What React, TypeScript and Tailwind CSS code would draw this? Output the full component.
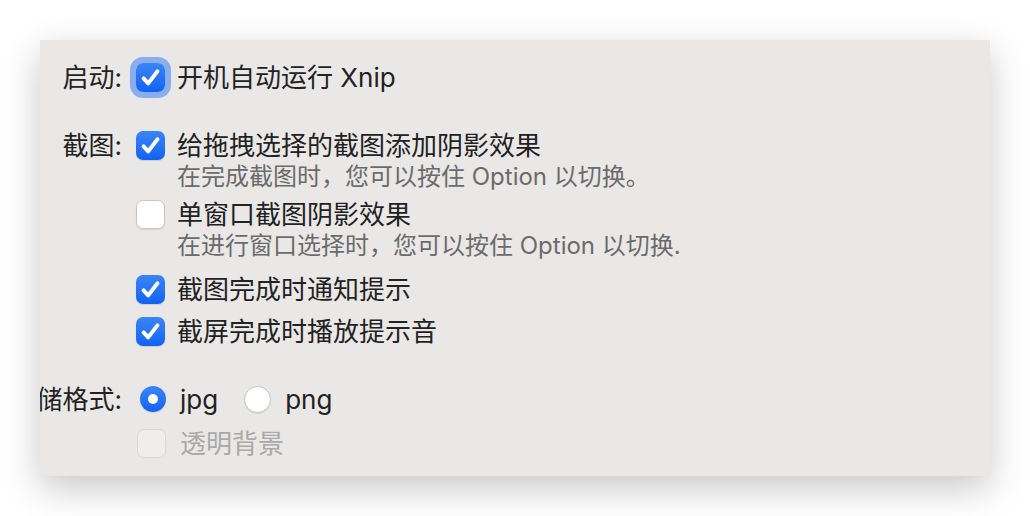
import React from "react";

const FONT = { fontFamily: '"Inter", "Noto Sans CJK SC", sans-serif' };

function Check({ checked, focus, disabled }: { checked?: boolean; focus?: boolean; disabled?: boolean }) {
  if (disabled) {
    return (
      <div className="w-[29px] h-[29px] shrink-0 rounded-[7px] border border-[#d9d8d7] bg-[#efeeed]" />
    );
  }
  if (!checked) {
    return (
      <div className="w-[29px] h-[29px] shrink-0 rounded-[7px] border border-[#c6c6c6] bg-white shadow-[0_1px_1px_rgba(0,0,0,0.08)]" />
    );
  }
  return (
    <div
      className={
        "w-[29px] h-[29px] shrink-0 rounded-[7px] bg-gradient-to-b from-[#3a85f8] to-[#1262f1] flex items-center justify-center " +
        (focus ? "shadow-[0_0_0_6px_rgba(120,162,242,0.85)]" : "shadow-[0_1px_1px_rgba(0,0,0,0.12)]")
      }
    >
      <svg width="29" height="29" viewBox="0 0 29 29">
        <path d="M7.6 15.4 L12.2 20.4 L21.4 8.4" fill="none" stroke="white" strokeWidth="4" strokeLinecap="round" strokeLinejoin="round" />
      </svg>
    </div>
  );
}

function Radio({ on }: { on?: boolean }) {
  if (on) {
    return (
      <div className="w-[26px] h-[26px] shrink-0 rounded-full bg-gradient-to-b from-[#3a85f8] to-[#1262f1] flex items-center justify-center shadow-[0_1px_1px_rgba(0,0,0,0.12)]">
        <div className="w-[10px] h-[10px] rounded-full bg-white" />
      </div>
    );
  }
  return (
    <div className="w-[27px] h-[27px] shrink-0 rounded-full border border-[#c6c6c6] bg-white shadow-[0_1px_1px_rgba(0,0,0,0.08)]" />
  );
}

function Label({ text }: { text?: string }) {
  return (
    <div className="w-[82px] shrink-0 flex justify-end">
      {text ? <span className="shrink-0 whitespace-nowrap text-[26px] text-[#222222]">{text}</span> : null}
    </div>
  );
}

export default function App() {
  return (
    <div className="w-[1030px] h-[516px] bg-white pt-[40px] pl-[40px]" style={FONT}>
      <div className="w-[950px] h-[436px] bg-[#e9e8e6] overflow-hidden shadow-[0_12px_34px_rgba(0,0,0,0.22)] pt-[21px] flex flex-col">
        {/* Row 1 */}
        <div className="h-[32px] flex items-center">
          <Label text="启动:" />
          <div className="ml-[14px] flex items-center">
            <Check checked focus />
            <span className="ml-[12px] text-[26px] text-[#222222] whitespace-nowrap">开机自动运行 Xnip</span>
          </div>
        </div>

        {/* Row 2 */}
        <div className="h-[32px] mt-[36px] flex items-center">
          <Label text="截图:" />
          <div className="ml-[14px] flex items-center">
            <Check checked />
            <span className="ml-[12px] text-[26px] text-[#222222] whitespace-nowrap">给拖拽选择的截图添加阴影效果</span>
          </div>
        </div>
        <div className="h-[32px] flex items-center">
          <Label />
          <span className="ml-[55px] text-[24px] text-[#6b6b6b] whitespace-nowrap">在完成截图时，您可以按住 Option 以切换。</span>
        </div>

        {/* Row 3 */}
        <div className="h-[32px] mt-[5px] flex items-center">
          <Label />
          <div className="ml-[14px] flex items-center">
            <Check />
            <span className="ml-[12px] text-[26px] text-[#222222] whitespace-nowrap">单窗口截图阴影效果</span>
          </div>
        </div>
        <div className="h-[32px] flex items-center">
          <Label />
          <span className="ml-[55px] text-[24px] text-[#6b6b6b] whitespace-nowrap">在进行窗口选择时，您可以按住 Option 以切换.</span>
        </div>

        {/* Row 4 */}
        <div className="h-[32px] mt-[11px] flex items-center">
          <Label />
          <div className="ml-[14px] flex items-center">
            <Check checked />
            <span className="ml-[12px] text-[26px] text-[#222222] whitespace-nowrap">截图完成时通知提示</span>
          </div>
        </div>

        {/* Row 5 */}
        <div className="h-[32px] mt-[10px] flex items-center">
          <Label />
          <div className="ml-[14px] flex items-center">
            <Check checked />
            <span className="ml-[12px] text-[26px] text-[#222222] whitespace-nowrap">截屏完成时播放提示音</span>
          </div>
        </div>

        {/* Radio row */}
        <div className="h-[32px] mt-[36px] flex items-center">
          <Label text="存储格式:" />
          <div className="ml-[18px] flex items-center">
            <Radio on />
            <span className="ml-[14px] text-[26px] text-[#222222] whitespace-nowrap">jpg</span>
            <div className="ml-[26px]">
              <Radio />
            </div>
            <span className="ml-[14px] text-[26px] text-[#222222] whitespace-nowrap">png</span>
          </div>
        </div>

        {/* Disabled */}
        <div className="h-[32px] mt-[12px] flex items-center">
          <Label />
          <div className="ml-[15px] flex items-center">
            <Check disabled />
            <span className="ml-[14px] text-[26px] text-[#a9a9a9] whitespace-nowrap">透明背景</span>
          </div>
        </div>
      </div>
    </div>
  );
}
